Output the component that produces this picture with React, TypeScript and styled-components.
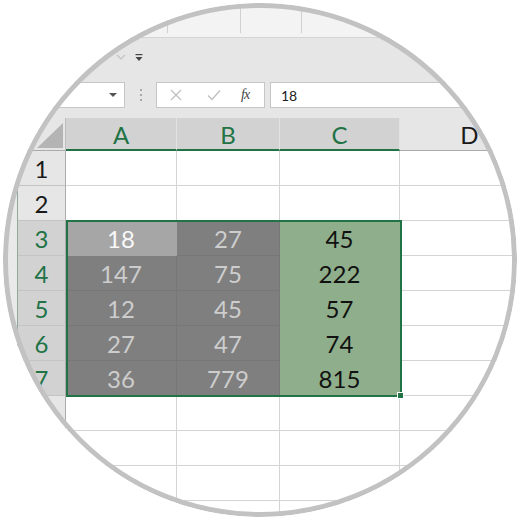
import React from 'react';
import styled, { createGlobalStyle } from 'styled-components';

const GREEN = '#217346';

const Global = createGlobalStyle`
  html, body { margin: 0; padding: 0; background: #ffffff; }
  body { font-family: Lato, "Open Sans", sans-serif; }
  * { box-sizing: border-box; }
`;

const Stage = styled.div`
  width: 520px;
  height: 520px;
  padding: 3px;
  background: #ffffff;
  overflow: hidden;
`;

const Lens = styled.div`
  position: relative;
  width: 514px;
  height: 514px;
  border-radius: 50%;
  overflow: hidden;
  background: #ffffff;
  &::after {
    content: '';
    position: absolute;
    inset: 0;
    border-radius: 50%;
    border: 5px solid #c2c2c2;
    pointer-events: none;
  }
`;

const Sheet = styled.div`
  margin: -3px;
  width: 520px;
  display: flex;
  flex-direction: column;
`;

const Ribbon = styled.div`
  height: 38px;
  background: #f3f3f3;
  border-bottom: 1px solid #d4d4d4;
  display: flex;
  align-items: flex-start;
  padding-top: 7px;
`;

const RibbonGroup = styled.div<{ $w: number }>`
  width: ${(p) => p.$w}px;
  height: 26px;
  border-right: 1px solid #d0d0d0;
`;

const Qat = styled.div`
  height: 42px;
  background: #e6e6e6;
  display: flex;
  align-items: center;
  padding-left: 116px;
  gap: 9px;
  padding-bottom: 4px;
`;

const FaintChevron = styled.svg`
  width: 10px;
  height: 6px;
`;

const CustomizeIcon = styled.svg`
  width: 8px;
  height: 9px;
`;

const FormulaRow = styled.div`
  height: 38px;
  background: #e6e6e6;
  display: flex;
  align-items: flex-start;
  padding-top: 2px;
`;

const NameBox = styled.div`
  width: 125px;
  height: 26px;
  background: #ffffff;
  border: 1px solid #c6c6c6;
  border-left: none;
  display: flex;
  align-items: center;
  justify-content: flex-end;
  padding-right: 7px;
`;

const DropArrow = styled.span`
  width: 0;
  height: 0;
  border-left: 4px solid transparent;
  border-right: 4px solid transparent;
  border-top: 4px solid #555;
`;

const Grip = styled.div`
  width: 31px;
  height: 26px;
  display: flex;
  flex-direction: column;
  align-items: center;
  justify-content: center;
  gap: 3px;
  & > span {
    width: 2px;
    height: 2px;
    background: #a9a9a9;
  }
`;

const FxBox = styled.div`
  width: 109px;
  height: 26px;
  background: #ffffff;
  border: 1px solid #c6c6c6;
  display: flex;
  align-items: center;
  padding-left: 13px;
`;

const FxSlot = styled.div<{ $w: number }>`
  width: ${(p) => p.$w}px;
  display: flex;
  align-items: center;
`;

const FxText = styled.span`
  font-family: "Liberation Serif", serif;
  font-style: italic;
  font-size: 14px;
  color: #444;
  letter-spacing: -1px;
`;

const FormulaInput = styled.div`
  flex: 1;
  margin-left: 5px;
  height: 26px;
  background: #ffffff;
  border: 1px solid #c6c6c6;
  border-right: none;
  display: flex;
  align-items: center;
  padding-left: 10px;
  font-size: 14px;
  color: #222;
`;

const Grid = styled.div`
  position: relative;
  display: grid;
  grid-template-columns: 18px 48px 111px 103px 120px 140px;
  grid-template-rows: 33px repeat(11, 35px);
  font-size: 24px;
`;

const Corner = styled.div`
  grid-column: span 2;
  position: relative;
  background: #e6e6e6;
  border-right: 1px solid #bdbdbd;
  border-bottom: 1px solid #ababab;
  &::after {
    content: '';
    position: absolute;
    right: 2px;
    bottom: 2px;
    width: 26px;
    height: 25px;
    background: #b4b4b4;
    clip-path: polygon(100% 0, 100% 100%, 0 100%);
  }
`;

const ColHead = styled.div<{ $active?: boolean }>`
  display: flex;
  align-items: center;
  justify-content: center;
  background: ${(p) => (p.$active ? '#d2d2d2' : '#e6e6e6')};
  color: ${(p) => (p.$active ? GREEN : '#1a1a1a')};
  border-right: 1px solid ${(p) => (p.$active ? '#e2e2e2' : '#e6e6e6')};
  border-bottom: ${(p) => (p.$active ? `2px solid ${GREEN}` : '1px solid #ababab')};
  padding-top: 1px;
`;

const Gutter = styled.div<{ $edge: boolean }>`
  background: #e9e9e9;
  border-right: 1px solid ${(p) => (p.$edge ? '#8fa99a' : '#e6e6e6')};
`;

const RowHead = styled.div<{ $active?: boolean }>`
  display: flex;
  align-items: center;
  justify-content: center;
  background: ${(p) => (p.$active ? '#d2d2d2' : '#e6e6e6')};
  color: ${(p) => (p.$active ? GREEN : '#1a1a1a')};
  border-bottom: 1px solid #c4c4c4;
  border-right: 1px solid #ababab;
`;

type Tone = 'empty' | 'active' | 'dark' | 'green';

const toneBg: Record<Tone, string> = {
  empty: '#ffffff',
  active: '#a6a6a6',
  dark: '#7f7f7f',
  green: '#8fae8b',
};
const toneFg: Record<Tone, string> = {
  empty: '#000',
  active: '#f8f8f8',
  dark: '#cdcdcd',
  green: '#111111',
};
const toneLine: Record<Tone, string> = {
  empty: '#d4d4d4',
  active: '#a6a6a6',
  dark: '#777777',
  green: '#8fae8b',
};

const Cell = styled.div<{ $tone: Tone }>`
  display: flex;
  align-items: center;
  justify-content: center;
  background: ${(p) => toneBg[p.$tone]};
  color: ${(p) => toneFg[p.$tone]};
  border-right: 1px solid ${(p) => toneLine[p.$tone]};
  border-bottom: 1px solid ${(p) => toneLine[p.$tone]};
  padding-top: 1px;
`;

const Selection = styled.div`
  position: absolute;
  left: 66px;
  top: 102px;
  width: 336px;
  height: 177px;
  border: 2px solid ${GREEN};
  pointer-events: none;
`;

const FillHandle = styled.div`
  position: absolute;
  left: 397px;
  top: 274px;
  width: 7px;
  height: 7px;
  background: ${GREEN};
  border: 1px solid #ffffff;
`;

const data: (number | null)[][] = [
  [null, null, null],
  [null, null, null],
  [18, 27, 45],
  [147, 75, 222],
  [12, 45, 57],
  [27, 47, 74],
  [36, 779, 815],
  [null, null, null],
  [null, null, null],
  [null, null, null],
  [null, null, null],
];

function toneFor(r: number, c: number): Tone {
  if (r < 2 || r > 6) return 'empty';
  if (c === 2) return 'green';
  if (r === 2 && c === 0) return 'active';
  return 'dark';
}

export default function App() {
  return (
    <>
      <Global />
      <Stage>
        <Lens>
          <Sheet>
            <Ribbon>
              <RibbonGroup $w={168} />
              <RibbonGroup $w={73} />
              <RibbonGroup $w={61} />
            </Ribbon>
            <Qat>
              <FaintChevron viewBox="0 0 10 6">
                <path d="M1 1 L5 5 L9 1" fill="none" stroke="#c2c2c2" strokeWidth="1.2" />
              </FaintChevron>
              <CustomizeIcon viewBox="0 0 8 9">
                <rect x="0.5" y="1" width="7" height="1.2" fill="#444" />
                <path d="M0.5 4 L7.5 4 L4 8 Z" fill="#444" />
              </CustomizeIcon>
            </Qat>
            <FormulaRow>
              <NameBox>
                <DropArrow />
              </NameBox>
              <Grip>
                <span />
                <span />
                <span />
              </Grip>
              <FxBox>
                <FxSlot $w={37}>
                  <svg width="12" height="12" viewBox="0 0 12 12">
                    <path d="M1 1 L11 11 M11 1 L1 11" stroke="#bfbfbf" strokeWidth="1.3" />
                  </svg>
                </FxSlot>
                <FxSlot $w={34}>
                  <svg width="14" height="12" viewBox="0 0 14 12">
                    <path d="M1 6.5 L5 10.5 L13 1.5" fill="none" stroke="#bfbfbf" strokeWidth="1.4" />
                  </svg>
                </FxSlot>
                <FxSlot $w={20}>
                  <FxText>fx</FxText>
                </FxSlot>
              </FxBox>
              <FormulaInput>18</FormulaInput>
            </FormulaRow>
            <Grid>
              <Corner />
              <ColHead $active>A</ColHead>
              <ColHead $active>B</ColHead>
              <ColHead $active>C</ColHead>
              <ColHead>D</ColHead>
              {data.map((row, r) => (
                <React.Fragment key={r}>
                  <Gutter $edge={r >= 1 && r <= 6} />
                  <RowHead $active={r >= 2 && r <= 6}>{r < 7 ? r + 1 : ''}</RowHead>
                  {row.map((v, c) => (
                    <Cell key={c} $tone={toneFor(r, c)}>
                      {v ?? ''}
                    </Cell>
                  ))}
                  <Cell $tone="empty" />
                </React.Fragment>
              ))}
              <Selection />
              <FillHandle />
            </Grid>
          </Sheet>
        </Lens>
      </Stage>
    </>
  );
}
